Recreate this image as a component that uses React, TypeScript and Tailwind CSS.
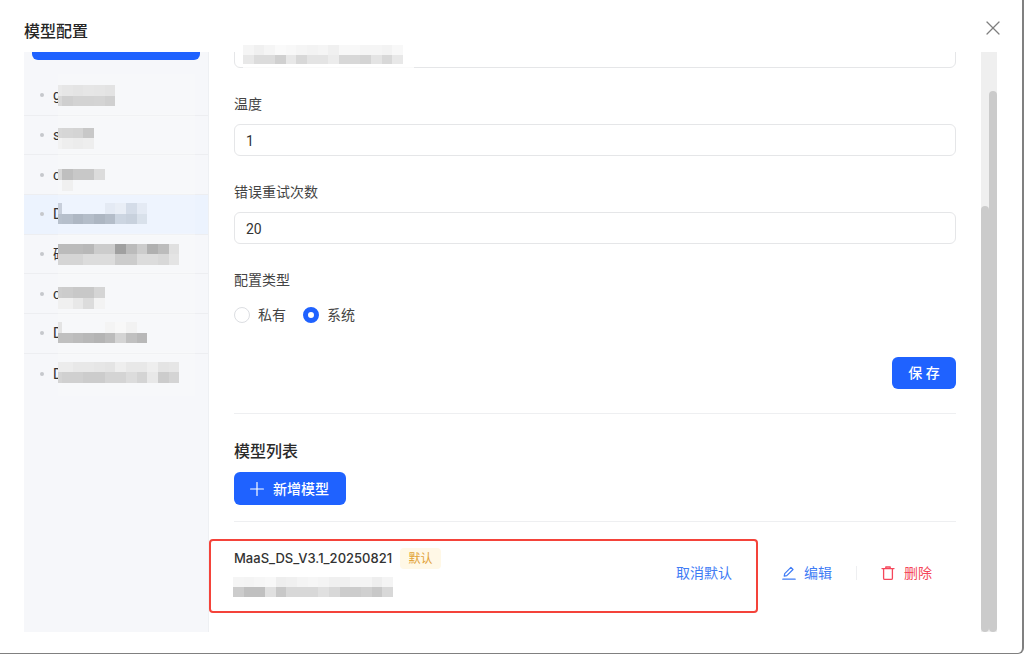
import { Plus, X } from "lucide-react";

type MosaicRow = (string | null)[];

const items: { letter: string; rows: MosaicRow[]; offset: number }[] = [
  {
    letter: "g",
    offset: 9,
    rows: [
      ["#e9e9e9", "#e6e6e6", "#e4e4e4", "#e6e6e6", "#e5e5e5", "#e3e3e3"],
      ["#d8d8d8", "#cfcfcf", "#d3d3d3", "#d3d3d3", "#d4d4d4", "#d0d0d0"],
    ],
  },
  {
    letter: "s",
    offset: 12,
    rows: [
      ["#d8d8d8", "#d6d6d6", "#d4d4d4", "#c8c8c8"],
      ["#f2f2f2", "#eeeeee", "#ececec", "#eeeeee"],
    ],
  },
  {
    letter: "c",
    offset: 14,
    rows: [
      ["#d8d8d8", "#bfbfbf", "#c8c8c8", "#c8c8c8", "#dcdcdc"],
      [null, "#f0f0f0", null, null, null],
    ],
  },
  {
    letter: "D",
    offset: 8,
    rows: [
      ["#c8cfdb", null, null, null, null, "#e4eaf4", "#e9eef6", "#d4dce8", "#e4eaf4"],
      ["#b8c1cd", "#b6bfcb", "#aeb7c3", "#b4bdc9", "#adb6c2", "#b4bdc9", "#ccd5e1", "#c8d1dd", "#d9e1eb"],
    ],
  },
  {
    letter: "硕",
    offset: 9,
    rows: [
      ["#bbbbbb", "#bbbbbb", "#bbbbbb", "#b8b8b8", "#cccccc", "#cccccc", "#a0a0a0", "#bbbbbb", "#cccccc", "#b0b0b0", "#bcbcbc", "#e0e0e0"],
      ["#d5d5d5", "#d5d5d5", "#d5d5d5", "#dcdcdc", "#dcdcdc", "#dcdcdc", "#cccccc", "#cccccc", "#dcdcdc", "#dcdcdc", "#d8d8d8", "#e4e4e4"],
    ],
  },
  {
    letter: "c",
    offset: 13,
    rows: [
      ["#cecece", "#cccccc", "#c8c8c8", "#c8c8c8", "#d5d5d5"],
      ["#f0f0f0", "#f0f0f0", "#e8e8e8", "#dcdcdc", "#f3f3f3"],
    ],
  },
  {
    letter: "D",
    offset: 8,
    rows: [
      ["#e4e4e4", null, null, null, null, "#f4f4f4", "#f8f8f8", "#f2f2f2", null],
      ["#c0c0c0", "#c0c0c0", "#bcbcbc", "#b8b8b8", "#b4b4b4", "#bcbcbc", "#d4d4d4", "#c0c0c0", "#b8b8b8"],
    ],
  },
  {
    letter: "D",
    offset: 8,
    rows: [
      ["#ececec", "#ececec", "#e8e8e8", "#e8e8e8", "#e6e6e6", "#e4e4e4", "#eeeeee", "#e8e8e8", "#e8e8e8", "#eeeeee", "#e4e4e4", "#e6e6e6"],
      ["#d4d4d4", "#d0d0d0", "#d0d0d0", "#cccccc", "#cccccc", "#d4d4d4", "#d4d4d4", "#dcdcdc", "#d4d4d4", "#e8e8e8", "#cccccc", "#d4d4d4"],
    ],
  },
];

const urlMosaic: MosaicRow[] = [
  ["#f5f5f5", "#f0f0f0", "#f5f5f5", "#fafafa", "#f8f8f8", "#f5f5f5", "#f3f3f3", "#f5f5f5", "#f0f0f0", "#f8f8f8", "#f8f8f8", "#f5f5f5", "#f5f5f5", "#f3f3f3", "#f8f8f8"],
  ["#e8e8e8", "#dcdcdc", "#dcdcdc", "#d0d0d0", "#e8e8e8", "#d8d8d8", "#e4e4e4", "#e4e4e4", "#ececec", "#d8d8d8", "#d8d8d8", "#d4d4d4", "#e4e4e4", "#d8d8d8", "#e8e8e8"],
];

const modelMosaic: MosaicRow[] = [
  ["#f5f5f5", "#f4f4f4", "#f6f6f6", "#f8f8f8", "#eeeeee", "#f0f0f0", "#f4f4f4", "#f6f6f6", "#f4f4f4", "#f0f0f0", "#f0f0f0", "#f4f4f4", "#f4f4f4", "#eeeeee", "#f4f4f4"],
  ["#cccccc", "#c0c0c0", "#c0c0c0", "#e0e0e0", "#c8c8c8", "#d8d8d8", "#d8d8d8", "#d8d8d8", "#e0e0e0", "#d8d8d8", "#cccccc", "#cccccc", "#d0d0d0", "#c8c8c8", "#d8d8d8"],
];

// blurred-out text from the screenshot, one block per cell
const Mosaic = ({ rows, firstWidth = 10.67, cellHeight = 10.67 }: { rows: MosaicRow[]; firstWidth?: number; cellHeight?: number }) => (
  <div className="flex flex-col">
    {rows.map((row, r) => (
      <div key={r} className="flex">
        {row.map((color, c) => (
          <div
            key={c}
            style={{
              width: c === 0 ? firstWidth : 10.67,
              height: cellHeight,
              backgroundColor: color ?? "transparent",
            }}
          />
        ))}
      </div>
    ))}
  </div>
);

const Field = ({ label, value, className = "" }: { label: string; value: string; className?: string }) => (
  <div className={className}>
    <div className="h-[22px] text-sm leading-[22px] text-[#444]">{label}</div>
    <div className="mt-[9px] flex h-8 items-center rounded-md border border-[#e5e6e8] px-[11px] pt-px text-sm text-[#333]">
      {value}
    </div>
  </div>
);

const PencilIcon = () => (
  <svg width="16" height="16" viewBox="0 0 16 16" fill="none" stroke="currentColor" strokeWidth="1.2" strokeLinejoin="round" strokeLinecap="round">
    <path d="M3.2 11.2l.5-2.6L9.9 2.4l2.1 2.1-6.2 6.2-2.6.5z" />
    <path d="M1.8 14.2h12.4" />
  </svg>
);

const TrashIcon = () => (
  <svg width="16" height="16" viewBox="0 0 16 16" fill="none" stroke="currentColor" strokeWidth="1.3" strokeLinejoin="round" strokeLinecap="round">
    <path d="M2 3.6h12" />
    <path d="M5.8 3.4V2h4.4v1.4" />
    <path d="M3.6 3.8v9.4c0 .7.5 1.2 1.2 1.2h6.4c.7 0 1.2-.5 1.2-1.2V3.8" />
  </svg>
);

export default function App() {
  return (
    <div className="h-[654px] w-[1024px] overflow-hidden bg-white font-['Roboto','Noto_Sans_CJK_SC',sans-serif]">
      <div className="h-[654px] w-[1024px] rounded-br-md border-r-2 border-b border-[#808080]">
        <div className="relative flex h-[52px] items-start justify-between pl-6 pr-[17px] pt-[20px]">
          <h1 className="text-base leading-6 font-medium text-[#262626]">模型配置</h1>
          <X size={24} strokeWidth={1.2} className="-mt-1 text-[#7f7f7f]" />
        </div>

        <div className="relative flex h-[580px] pl-6">
          {/* sidebar */}
          <aside className="h-full w-[185px] shrink-0 overflow-hidden border-r border-[#eef0f3] bg-[#f6f7fa]">
            <div className="mx-2 h-2 rounded-b-md bg-[#1f62ff]" />
            <ul className="mt-4">
              {items.map((item, i) => (
                <li
                  key={i}
                  className={`relative flex h-[39.7px] items-center pl-4 text-sm text-[#333] ${
                    i < items.length - 1 ? "border-b border-[#edeef1]" : ""
                  } ${i === 3 ? "bg-[#ecf3fe]" : ""}`}
                >
                  <span className="h-1 w-1 rounded-full bg-[#c6c8cc]" />
                  <span className="ml-[9px]">{item.letter}</span>
                  <div className="absolute top-[-2px] bottom-[-2px] left-[34px] w-[137px] bg-white/15" />
                  <div className="absolute left-[34px]" style={{ top: item.offset }}>
                    <Mosaic rows={item.rows} firstWidth={4} />
                  </div>
                </li>
              ))}
            </ul>
          </aside>

          {/* form */}
          <main className="h-full w-[772px] shrink-0 overflow-hidden px-[25px]">
            <div className="-mt-4 h-8 rounded-md border border-[#e5e6e8]" />
            <Field label="温度" value="1" className="mt-[25px]" />
            <Field label="错误重试次数" value="20" className="mt-[25px]" />
            <div className="mt-[25px] h-[22px] text-sm leading-[22px] text-[#444]">配置类型</div>
            <div className="mt-[13px] flex h-[22px] items-center text-sm text-[#444]">
              <span className="h-4 w-4 rounded-full border border-[#dcdee2]" />
              <span className="ml-2">私有</span>
              <span className="ml-[17px] h-4 w-4 rounded-full border-[5px] border-[#1f62ff]" />
              <span className="ml-2">系统</span>
            </div>
            <div className="mt-[31px] flex justify-end">
              <button className="h-8 w-16 rounded-md bg-[#1f62ff] text-sm font-medium text-white">保 存</button>
            </div>
            <div className="mt-6 h-px bg-[#eeeff1]" />
            <h2 className="mt-[26px] text-base leading-6 font-medium text-[#2a2a2a]">模型列表</h2>
            <button className="mt-2 flex h-[33px] w-28 items-center gap-[5px] rounded-md bg-[#1f62ff] pl-3 text-sm font-medium text-white">
              <Plus size={22} strokeWidth={1.3} />
              新增模型
            </button>
            <div className="mt-4 h-px bg-[#eeeff1]" />
            <div className="mt-[26px] flex items-center justify-between pr-6">
              <div className="flex-1">
                <div className="flex h-[21px] items-center gap-2">
                  <span className="font-['Inter'] text-[13px] font-medium text-[#333]">MaaS_DS_V3.1_20250821</span>
                  <span className="flex h-[21px] w-[41px] items-center justify-center rounded bg-[#fff8e6] text-xs text-[#e2a33a]">
                    默认
                  </span>
                </div>
                <div className="mt-2 -ml-px">
                  <Mosaic rows={modelMosaic} cellHeight={10} />
                </div>
              </div>
              <span className="text-sm text-[#3f7cf5]">取消默认</span>
              <span className="ml-[49px] flex items-center gap-[7px] text-sm text-[#3f7cf5]">
                <PencilIcon />
                编辑
              </span>
              <span className="ml-6 mr-[23px] h-[14px] w-px bg-[#eeeff1]" />
              <span className="flex items-center gap-2 text-sm text-[#f5475b]">
                <TrashIcon />
                删除
              </span>
            </div>
          </main>

          {/* nested scrollbars */}
          <div className="flex h-full w-4 shrink-0 bg-[#efefef]">
            <div className="h-full w-2 pt-[154px]">
              <div className="h-full rounded-full bg-[#cbcbcb]" />
            </div>
            <div className="h-full w-2 pt-[39px]">
              <div className="h-full rounded-full bg-[#cbcbcb]" />
            </div>
          </div>

          {/* blurred url sitting over the clipped input */}
          <div className="absolute top-[-7px] left-[243px] bg-white/80 pr-[11px] pb-[6px]">
            <Mosaic rows={urlMosaic} cellHeight={9.5} />
          </div>
        </div>
      </div>

      {/* red annotation box drawn on the screenshot */}
      <div className="absolute top-[539px] left-[209px] h-[74px] w-[549px] rounded-sm border-2 border-[#f4433a]" />
    </div>
  );
}
